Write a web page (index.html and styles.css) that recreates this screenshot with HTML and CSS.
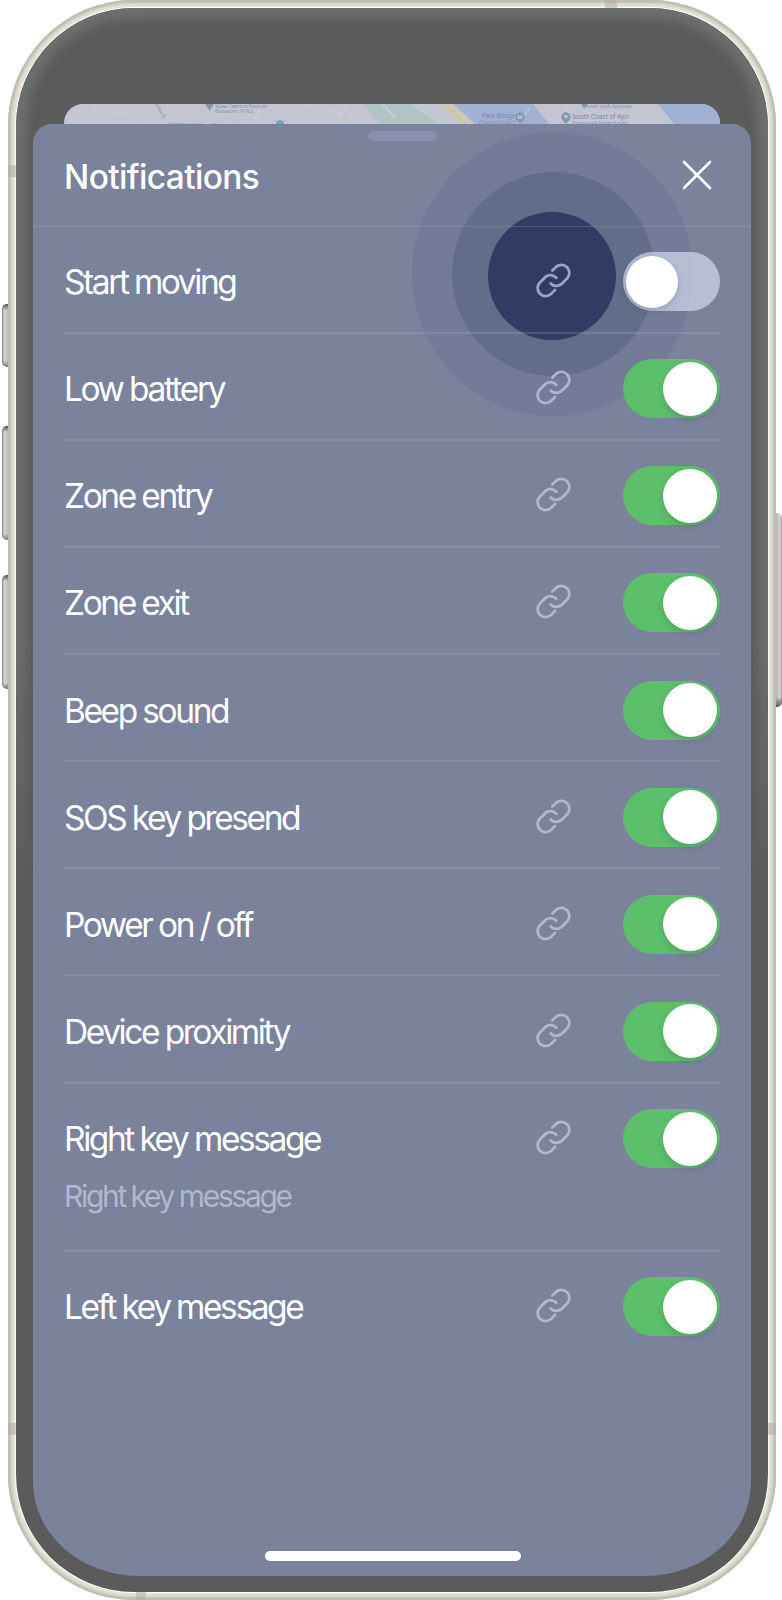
FILE: index.html
```html
<!DOCTYPE html>
<html lang="en">
<head>
    <meta charset="UTF-8">
    <meta name="viewport" content="width=device-width, initial-scale=1.0">
    <title>Notifications</title>
    <link rel="stylesheet" href="styles.css">
</head>
<body>
    <svg class="defs" width="0" height="0">
        <symbol id="link" viewBox="0 0 35 35">
            <path d="M16.3 7.6 L20 3.9 A8 8 0 0 1 31.3 15.2 L25.3 21.2 A7.8 7.8 0 0 1 14.7 20.5"/>
            <path d="M20.3 14.7 A7.8 7.8 0 0 0 9.5 13.9 L3.7 19.7 A8 8 0 0 0 15 31 L19 27"/>
        </symbol>
    </svg>

    <div class="phone">
        <span class="side-button mute"></span>
        <span class="side-button volume-up"></span>
        <span class="side-button volume-down"></span>
        <span class="side-button power"></span>
        <div class="frame">
            <span class="antenna antenna-top"></span>
            <span class="antenna antenna-left-top"></span>
            <span class="antenna antenna-left"></span>
            <span class="antenna antenna-right"></span>
            <span class="antenna antenna-bottom"></span>
            <div class="bezel">
                <svg class="map" viewBox="0 0 656 20">
                    <rect width="656" height="20" fill="#c4c5d2"/>
                    <path d="M298 0h50l22 12 5 8h-59z" fill="#b1c4c4"/>
                    <path d="M318 0l14 14M348 0l30 20" stroke="#c8cdd7" stroke-width="2" fill="none"/>
                    <path d="M389 0h80l16 20h-78z" fill="#a1b1d3"/>
                    <path d="M594 0h62v20h-46z" fill="#a1b1d3"/>
                    <path d="M376 0h13l22 20h-14z" fill="#cfc8b2"/>
                    <path d="M380 0l22 20" stroke="#bfb6ab"/>
                    <path d="M283 0l-8 16M292 0l-9 18" stroke="#cbcac8" stroke-width="3"/>
                    <path d="M467 3l-13 17M30 0l5 12 30-4M80 20l-7-12 13-8M188 20l10-20M240 0l40 10M500 2l12 18" stroke="#cdcfda" fill="none"/>
                    <path d="M141 0h9l-4.500 7zM517 0h7l-3.500 5z" fill="#8499ae"/>
                    <circle cx="216" cy="20" r="4" fill="#68a9c3"/>
                    <g fill="#8499ae">
                        <circle cx="456" cy="13" r="4.700"/>
                        <path d="M452 15h8l-4 5z"/>
                        <circle cx="502" cy="13" r="4.700"/>
                        <path d="M498 15h8l-4 5z"/>
                    </g>
                    <circle cx="502" cy="12.500" r="1.800" fill="#c4c5d2"/>
                    <text class="map-metro" x="453.300" y="15">M</text>
                    <g class="map-label">
                        <text x="151" y="4" textLength="52">Храм Святого Василія</text>
                        <text x="151" y="9" textLength="38">Великого УГКЦ</text>
                        <text x="105" y="22" textLength="34">Хортицький</text>
                        <text x="148" y="23" textLength="56">Turboatom Arena</text>
                        <text x="518" y="4" textLength="50">Кінний клуб Аргамак</text>
                        <text x="508" y="21" textLength="56">Південний Берег Києва</text>
                        <text x="415" y="20" textLength="36">Парковий міст</text>
                        <text transform="translate(91 0) rotate(62)">ivska St</text>
                    </g>
                    <g class="map-label large">
                        <text x="418" y="14" textLength="33">Park Bridge</text>
                        <text x="508" y="15" textLength="57">South Coast of Kyiv</text>
                    </g>
                </svg>
                <main class="sheet">
                    <div class="highlight">
                        <span class="ring outer"></span>
                        <span class="ring middle"></span>
                        <span class="ring inner"></span>
                    </div>
                    <header class="header">
                        <span class="handle"></span>
                        <h1>Notifications</h1>
                        <svg class="close" viewBox="0 0 30 30"><path d="M2 2L28 28M28 2L2 28"/></svg>
                    </header>
                    <ul class="list">
                        <li class="item">
                            <span class="name">Start moving</span>
                            <svg class="link"><use href="#link"/></svg>
                            <span class="toggle off"></span>
                        </li>
                        <li class="item">
                            <span class="name">Low battery</span>
                            <svg class="link"><use href="#link"/></svg>
                            <span class="toggle"></span>
                        </li>
                        <li class="item">
                            <span class="name">Zone entry</span>
                            <svg class="link"><use href="#link"/></svg>
                            <span class="toggle"></span>
                        </li>
                        <li class="item">
                            <span class="name">Zone exit</span>
                            <svg class="link"><use href="#link"/></svg>
                            <span class="toggle"></span>
                        </li>
                        <li class="item">
                            <span class="name">Beep sound</span>
                            <span class="toggle"></span>
                        </li>
                        <li class="item">
                            <span class="name">SOS key presend</span>
                            <svg class="link"><use href="#link"/></svg>
                            <span class="toggle"></span>
                        </li>
                        <li class="item">
                            <span class="name">Power on / off</span>
                            <svg class="link"><use href="#link"/></svg>
                            <span class="toggle"></span>
                        </li>
                        <li class="item">
                            <span class="name">Device proximity</span>
                            <svg class="link"><use href="#link"/></svg>
                            <span class="toggle"></span>
                        </li>
                        <li class="item tall">
                            <span class="name">Right key message</span>
                            <svg class="link"><use href="#link"/></svg>
                            <span class="toggle"></span>
                            <span class="note">Right key message</span>
                        </li>
                        <li class="item">
                            <span class="name">Left key message</span>
                            <svg class="link"><use href="#link"/></svg>
                            <span class="toggle"></span>
                        </li>
                    </ul>
                    <span class="home-bar"></span>
                </main>
            </div>
        </div>
    </div>
</body>
</html>
```

FILE: styles.css
```css
* {
    box-sizing: border-box;
}
body {
    margin: 0;
    background: #fff;
    font-family: Inter, "Liberation Sans", sans-serif;
    color: #fff;
}
.defs {
    position: absolute;
}
.phone {
    position: relative;
    width: 782px;
    height: 1600px;
    padding: 0 6px 0 8px;
}
.frame {
    position: relative;
    height: 1600px;
    padding: 8px;
    border-radius: 126px;
    background: #fffff6;
    box-shadow: inset 0 0 0 2px #c1beb5, inset 0 0 0 3px #cbc8bf, inset 0 0 0 4px #d5d3ca, inset 0 0 0 5px #dedcd1, inset 0 0 0 7px #e3e2d6;
}
.bezel {
    position: relative;
    height: 1584px;
    padding: 96px 17px 0;
    border-radius: 118px;
    background: #5b5b5b;
}
/* soft reflection on the upper part of the glass */
.bezel::before {
    content: "";
    position: absolute;
    inset: 0;
    border-radius: 118px;
    box-shadow: inset 0 0 10px 11px #6c6f6d;
    -webkit-mask-image: linear-gradient(#000 40%, transparent 56%);
    mask-image: linear-gradient(#000 40%, transparent 56%);
}

/* hardware details */
.side-button {
    position: absolute;
    left: 2px;
    width: 8px;
    border-radius: 5px 0 0 5px;
    background: linear-gradient(#4c4e47, transparent 6px, transparent calc(100% - 6px), #777770), linear-gradient(90deg, #8f8f89, #d8d8d6 35%, #c5c5c0 60%, #aaa9a2);
}
.mute {
    top: 304px;
    height: 63px;
}
.volume-up {
    top: 426px;
    height: 114px;
}
.volume-down {
    top: 575px;
    height: 114px;
}
.power {
    left: auto;
    right: 0;
    top: 513px;
    height: 194px;
    border-radius: 0 5px 5px 0;
    background: linear-gradient(transparent calc(100% - 10px), #555), linear-gradient(90deg, #aaa9a2, #c6c5c1 50%, #d8d8d6 75%, #999);
}
.antenna {
    position: absolute;
    background: rgba(175, 170, 155, 0.5);
}
.antenna-top {
    top: 0;
    left: 597px;
    width: 12px;
    height: 8px;
}
.antenna-left-top {
    top: 165px;
    left: 0;
    width: 8px;
    height: 12px;
}
.antenna-left,
.antenna-right {
    top: 1423px;
    width: 8px;
    height: 12px;
}
.antenna-left {
    left: 0;
}
.antenna-right {
    right: 0;
}
.antenna-bottom {
    bottom: 0;
    left: 128px;
    width: 10px;
    height: 8px;
}

/* map behind the sheet */
.map {
    position: relative;
    display: block;
    width: 656px;
    height: 20px;
    margin: 0 auto;
    border-radius: 19px 19px 0 0;
}
.map-label {
    font: 5px Roboto, sans-serif;
    fill: #8e97a8;
}
.large {
    font-size: 6.5px;
    fill: #7c8ba7;
}
.map-metro {
    font: bold 6px Roboto, sans-serif;
    fill: #c4c5d2;
}

.sheet {
    position: relative;
    height: 1452px;
    margin-top: -0.5px;
    overflow: hidden;
    border-radius: 19px 19px 106px 106px / 19px 19px 94px 94px;
    background: #7b829b;
}
.highlight {
    position: absolute;
    left: 379px;
    top: 8px;
    width: 281px;
    height: 284px;
}
.ring {
    position: absolute;
    border-radius: 50%;
}
.outer {
    inset: 0;
    background: #747b97;
}
.middle {
    left: 40px;
    top: 40px;
    width: 203px;
    height: 204px;
    background: #636c88;
}
.inner {
    left: 76px;
    top: 80px;
    width: 128px;
    height: 128px;
    background: #303c64;
}
.header {
    position: relative;
    display: flex;
    align-items: center;
    justify-content: space-between;
    height: 103px;
    padding: 2px 39px 0 31px;
    border-bottom: 1px solid rgba(168, 176, 205, 0.24);
}
.handle {
    position: absolute;
    top: 7px;
    left: 335px;
    width: 69px;
    height: 10px;
    border-radius: 5px;
    background: #888fac;
}
h1 {
    margin: 3px 0 0;
    font-size: 33.4px;
    font-weight: 500;
    line-height: 40px;
    letter-spacing: -0.6px;
}
.close {
    width: 30px;
    height: 30px;
    margin-top: -1px;
    fill: none;
    stroke: #fff;
    stroke-width: 2.6;
    stroke-linecap: round;
}
.list {
    position: relative;
    margin: 0;
    padding: 0 31px;
    list-style: none;
}
.item {
    display: grid;
    grid-template-columns: 1fr 35px 97.5px;
    column-gap: 51.5px;
    align-items: center;
    align-content: start;
    height: 107.150px;
    padding-top: 25.5px;
    border-bottom: 2px solid rgba(168, 176, 205, 0.24);
}
.item:last-child {
    border-bottom: none;
}
.tall {
    height: 168.300px;
}
.name {
    margin-top: 1px;
    font-size: 33.5px;
    line-height: 40px;
    letter-spacing: -2.42px;
    word-spacing: -0.5px;
    white-space: nowrap;
}
.note {
    grid-column: 1 / -1;
    margin-top: 8px;
    font-size: 30px;
    line-height: 40px;
    letter-spacing: -2.32px;
    word-spacing: -0.5px;
    color: #b0b8cf;
}
.link {
    width: 35px;
    height: 35px;
    margin-top: -2px;
    fill: none;
    stroke: rgba(192, 202, 228, 0.74);
    stroke-width: 2.8;
    stroke-linecap: round;
}
.toggle {
    grid-column: 3;
    display: flex;
    align-items: center;
    justify-content: flex-end;
    height: 59px;
    padding: 0 3px 0 3.5px;
    border-radius: 30px;
    background: rgba(87, 202, 98, 0.85);
}
.toggle::after {
    content: "";
    width: 54px;
    height: 54px;
    border-radius: 50%;
    background: #fff;
    box-shadow: 0 3px 6px rgba(40, 50, 60, 0.2);
}
.off {
    justify-content: flex-start;
    background: rgba(204, 212, 232, 0.74);
}
.off::after {
    width: 52px;
    height: 52px;
}
.home-bar {
    position: absolute;
    left: 232px;
    bottom: 15px;
    width: 256px;
    height: 10px;
    border-radius: 5px;
    background: #fff;
}
```
